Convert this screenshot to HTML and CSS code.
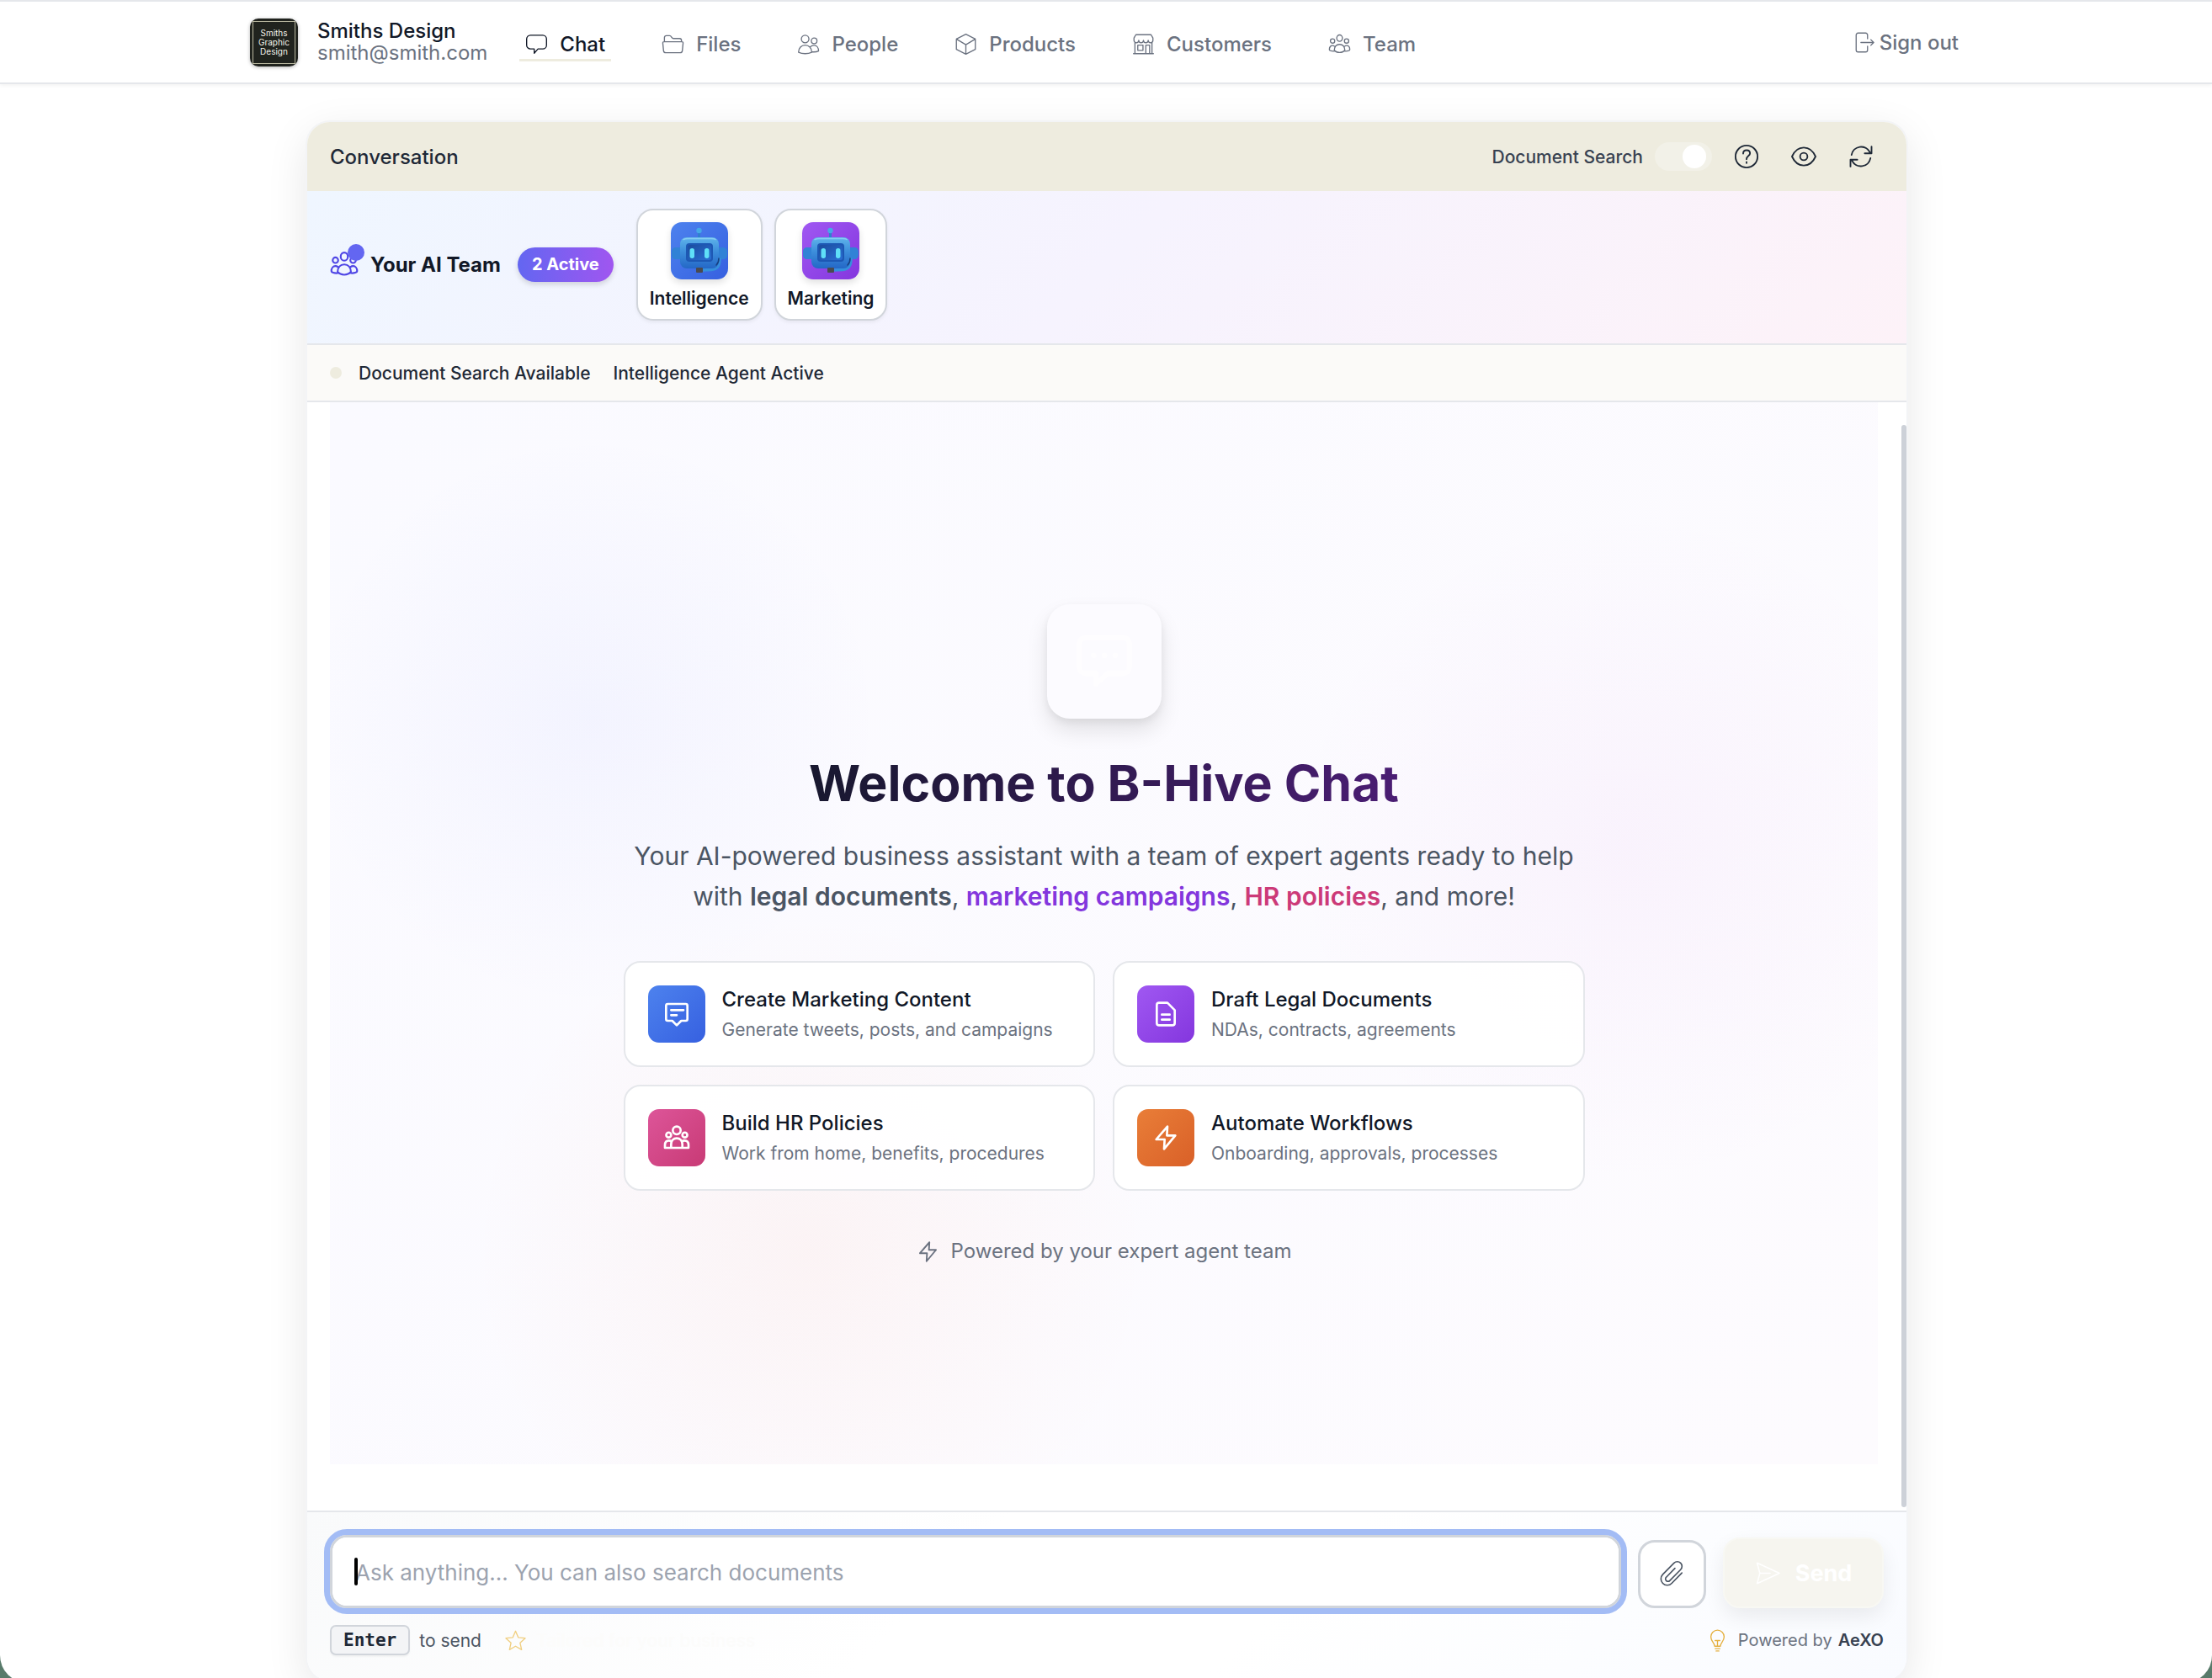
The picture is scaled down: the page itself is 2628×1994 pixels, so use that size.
FILE: index.html
```html
<!DOCTYPE html>
<html lang="en">
<head>
  <meta charset="UTF-8">
  <title>B-Hive Chat | Smiths Design</title>
  <meta name="viewport" content="width=device-width, initial-scale=1.0" />
  <link rel="stylesheet" href="styles.css">
</head>
<body>
  <!-- shared icons -->
  <svg class="sprite" width="0" height="0" aria-hidden="true">
    <symbol id="i-team" viewBox="0 0 24 24">
      <ellipse cx="12" cy="5.6" rx="3" ry="3.4"/>
      <circle cx="4.6" cy="8.6" r="2.3"/>
      <circle cx="19.4" cy="8.6" r="2.3"/>
      <path d="M12 12.2c-3.4 0-5.4 2.6-5.6 6.2 1.4 1.6 3.2 2.4 5.6 2.4s4.200-.8 5.600-2.400c-.2-3.600-2.200-6.200-5.600-6.200z"/>
      <path d="M6.600 14.200c-.6-.5-1.200-.7-2-.7-2 0-3.400 1.700-3.400 4.300 0 1 2.400 1.900 5.300 1.600M17.400 14.200c.6-.5 1.200-.7 2-.7 2 0 3.400 1.700 3.400 4.300 0 1-2.400 1.900-5.300 1.600"/>
    </symbol>
    <symbol id="i-bolt" viewBox="0 0 24 24">
      <path d="M13.500 2 3.500 13.500H11L10.500 22 20.500 10H13z"/>
    </symbol>
    <symbol id="i-robot" viewBox="0 0 68 68">
      <defs>
        <linearGradient id="head" x1="0" y1="0" x2="0" y2="1">
          <stop offset="0" stop-color="#5fb4ea"/>
          <stop offset=".45" stop-color="#3d8fdc"/>
          <stop offset="1" stop-color="#2467c6"/>
        </linearGradient>
        <linearGradient id="face" x1="0" y1="0" x2="1" y2="1">
          <stop offset="0" stop-color="#1b4c9e"/>
          <stop offset="1" stop-color="#2a70d4"/>
        </linearGradient>
      </defs>
      <rect x="32" y="12" width="3" height="8" fill="#2f7fd0"/>
      <circle cx="33.500" cy="10" r="3.200" fill="#45a8e8"/>
      <path d="M12 30H6c-3 0-5 2-5 5v4c0 3 2 5 5 5h6zM56 30h6c3 0 5 2 5 5v4c0 3-2 5-5 5h-6z" fill="#3182d6"/>
      <path d="M58 44c0 8-4 12-10 12.500L37 57" fill="none" stroke="#3590dc" stroke-width="3.500"/>
      <rect x="11" y="18" width="46" height="37" rx="8" fill="url(#head)"/>
      <path d="M15 20.500c2-1 4-1 6-1h27c2 0 4 0 5 1" fill="none" stroke="#86cdf3" stroke-width="1.500" stroke-linecap="round"/>
      <rect x="18" y="25" width="32" height="22" rx="4" fill="#1d58b4"/>
      <rect x="20" y="27" width="28" height="18" rx="3" fill="url(#face)"/>
      <rect x="22.500" y="31" width="5.500" height="12" rx="2.700" fill="#5fe0f8"/>
      <rect x="40" y="31" width="5.500" height="12" rx="2.700" fill="#5fe0f8"/>
      <path d="M57 43c0 3-1 6-3 8" fill="none" stroke="#173f80" stroke-width="1.500"/>
      <rect x="30" y="54" width="8" height="6" rx="1" fill="#4a4a50"/>
    </symbol>
  </svg>

  <div class="window">
    <header class="topbar">
      <div class="topbar-inner">
        <div class="logo"><span>Smiths<br>Graphic<br>Design</span></div>
        <div class="account">
          <div class="account-name">Smiths Design</div>
          <div class="account-mail">smith@smith.com</div>
        </div>
        <nav class="nav">
          <a href="#" class="nav-link active">
            <svg class="icon" viewBox="0 0 24 24"><path d="M5.500 2.500h13a4 4 0 0 1 4 4v6.500a4 4 0 0 1-4 4h-5L9.500 21.500V17h-4a4 4 0 0 1-4-4V6.500a4 4 0 0 1 4-4z"/></svg>Chat</a>
          <a href="#" class="nav-link">
            <svg class="icon" viewBox="0 0 24 24"><path d="M3 9.500V5a2 2 0 0 1 2-2h3.500c2 0 2 3 4 3H19a2 2 0 0 1 2 2v1.500M2.500 9.500h19c1 0 1.300.6 1.200 1.500l-.8 8a2.300 2.300 0 0 1-2.300 2H4.400a2.300 2.300 0 0 1-2.300-2l-.8-8c-.1-.9.2-1.500 1.200-1.500z"/></svg>Files</a>
          <a href="#" class="nav-link">
            <svg class="icon" viewBox="0 0 24 24"><circle cx="8.500" cy="6.500" r="4"/><circle cx="18" cy="8.500" r="3"/><path d="M8.500 13C4.500 13 1.500 16 1.500 20.500c4 2 10 2 14 0C15.500 16 12.500 13 8.500 13zM13.700 15c1.200-1.200 2.600-1.800 4.200-1.800 3 0 4.800 2.600 4.800 6-1.800.9-4.600 1.200-7.200.9"/></svg>People</a>
          <a href="#" class="nav-link">
            <svg class="icon" viewBox="0 0 24 24"><path d="M12 1.500 22 6.500v11L12 22.500l-10-5v-11zM2 6.500l10 6 10-6M12 12.500v10"/></svg>Products</a>
          <a href="#" class="nav-link">
            <svg class="icon" viewBox="0 0 24 24"><path d="M4 2h16l2 3.500V8a2.500 2.500 0 0 1-5 0 2.500 2.500 0 0 1-5 0 2.500 2.500 0 0 1-5 0 2.500 2.500 0 0 1-5 0V5.500zM3 10.500V22M21 10.500V22M1.500 22h21M6 13h5.500v5.500H6zM14.500 22v-9h4v9"/></svg>Customers</a>
          <a href="#" class="nav-link">
            <svg class="icon"><use href="#i-team"/></svg>Team</a>
        </nav>
        <a href="#" class="signout">
          <svg class="icon" viewBox="0 0 24 24"><path d="M14 8V4a2 2 0 0 0-2-2H4a2 2 0 0 0-2 2v16a2 2 0 0 0 2 2h8a2 2 0 0 0 2-2v-4M7 12h13.500M17.500 9l3 3-3 3"/></svg>Sign out</a>
      </div>
    </header>

    <main class="main">
      <section class="chat">
        <div class="chat-header">
          <h2>Conversation</h2>
          <div class="chat-tools">
            <label for="docSearch">Document Search</label>
            <input type="checkbox" id="docSearch" class="toggle" checked />
            <button type="button" class="tool" aria-label="Help">
              <svg viewBox="0 0 24 24"><circle cx="12" cy="12" r="10.500"/><path d="M8.800 9.200c0-2 1.500-3.200 3.300-3.200s3.200 1.200 3.200 3c0 2.500-3.300 2.500-3.300 5.500M12 17.200v1"/></svg>
            </button>
            <button type="button" class="tool" aria-label="Preview">
              <svg viewBox="0 0 24 24"><path d="M12 3.500c5 0 9 3.600 11.200 8.500C21 16.900 17 20.500 12 20.500S3 16.900.8 12C3 7.100 7 3.500 12 3.500z"/><circle cx="12" cy="12" r="3.500"/></svg>
            </button>
            <button type="button" class="tool" aria-label="Refresh">
              <svg viewBox="0 0 24 24"><path d="M3 10.500a9.300 9.300 0 0 1 17.500-2.500M22 2.500v6.500h-6.500M21 13.500A9.300 9.300 0 0 1 3.500 16M2 21.500V15h6.500"/></svg>
            </button>
          </div>
        </div>

        <div class="team">
          <div class="team-title">
            <span class="team-icon"><svg><use href="#i-team"/></svg></span>
            <h3>Your AI Team</h3>
          </div>
          <span class="badge">2 Active</span>
          <div class="agents">
            <button type="button" class="agent">
              <span class="agent-pic blue"><svg><use href="#i-robot"/></svg></span>Intelligence
            </button>
            <button type="button" class="agent">
              <span class="agent-pic purple"><svg><use href="#i-robot"/></svg></span>Marketing
            </button>
          </div>
        </div>

        <div class="status">
          <span class="status-dot"></span>
          <span>Document Search Available</span>
          <span class="status-agent">Intelligence Agent Active</span>
        </div>

        <div class="messages">
          <div class="welcome">
            <div class="welcome-icon">
              <svg viewBox="0 0 24 24"><path d="M4 2h16a2.500 2.500 0 0 1 2.500 2.500v10A2.500 2.500 0 0 1 20 17h-6.500l-5 4.500V17H4a2.500 2.500 0 0 1-2.500-2.500v-10A2.500 2.500 0 0 1 4 2zM7.500 9.500h.1M12 9.500h.1M16.500 9.500h.1"/></svg>
            </div>
            <h1>Welcome to B-Hive Chat</h1>
            <p class="intro">Your AI-powered business assistant with a team of expert agents ready to help<br>
              with <strong>legal documents</strong>, <strong class="c-purple">marketing campaigns</strong>, <strong class="c-pink">HR policies</strong>, and more!</p>
            <div class="cards">
              <button type="button" class="card">
                <span class="card-icon blue"><svg viewBox="0 0 24 24"><path d="M4 3h16a1.500 1.500 0 0 1 1.500 1.500v12A1.500 1.500 0 0 1 20 18h-4l-4 4-4-4H4a1.500 1.500 0 0 1-1.500-1.500v-12A1.500 1.500 0 0 1 4 3zM7 8.500h11M7 13h5"/></svg></span>
                <span class="card-text"><b>Create Marketing Content</b><small>Generate tweets, posts, and campaigns</small></span>
              </button>
              <button type="button" class="card">
                <span class="card-icon purple"><svg viewBox="0 0 24 24"><path d="M6 2h7.500L20 8.500V20a2 2 0 0 1-2 2H6a2 2 0 0 1-2-2V4a2 2 0 0 1 2-2zM8.500 12.500h7M8.500 17h7"/></svg></span>
                <span class="card-text"><b>Draft Legal Documents</b><small>NDAs, contracts, agreements</small></span>
              </button>
              <button type="button" class="card">
                <span class="card-icon pink"><svg viewBox="0 0 24 24"><circle cx="12" cy="5.500" r="3.500"/><circle cx="4.800" cy="9.500" r="2.200"/><circle cx="19.200" cy="9.500" r="2.200"/><path d="M7 21v-3c0-3.500 2-5.500 5-5.500s5 2 5 5.500v3zM7 21H1.500v-2.500c0-2.600 1.500-4 3.500-4 1 0 1.800.3 2.400.8M17 21h5.500v-2.500c0-2.600-1.500-4-3.500-4-1 0-1.800.3-2.400.8"/></svg></span>
                <span class="card-text"><b>Build HR Policies</b><small>Work from home, benefits, procedures</small></span>
              </button>
              <button type="button" class="card">
                <span class="card-icon orange"><svg><use href="#i-bolt"/></svg></span>
                <span class="card-text"><b>Automate Workflows</b><small>Onboarding, approvals, processes</small></span>
              </button>
            </div>
            <div class="powered"><svg><use href="#i-bolt"/></svg>Powered by your expert agent team</div>
          </div>
          <div class="scrollbar"></div>
        </div>

        <form class="composer">
          <div class="composer-row">
            <div class="field">
              <textarea rows="1" aria-label="Message" placeholder="Ask anything... You can also search documents"></textarea>
              <span class="caret"></span>
            </div>
            <button type="button" class="attach" aria-label="Attach file">
              <svg viewBox="0 0 24 24"><path d="m20.500 11-8.800 9a5.300 5.300 0 0 1-7.700 0 5.500 5.500 0 0 1 0-7.700l9.700-9.800a4 4 0 0 1 5.700 0 4 4 0 0 1 0 5.700L10 17.700a2 2 0 0 1-3 0 2 2 0 0 1 0-3L14.500 7"/></svg>
            </button>
            <button type="submit" class="send" disabled>
              <svg viewBox="0 0 24 24"><path d="M2 2.500 22.500 12 2 21.500 4.500 12zM4.500 12H14"/></svg>Send
            </button>
          </div>
          <div class="composer-foot">
            <kbd>Enter</kbd>
            <span>to send</span>
            <svg class="star" viewBox="0 0 24 24"><path d="m12 2 3 6.800 7.200.7-5.400 5 1.600 7.200L12 18l-6.400 3.700 1.600-7.200-5.400-5L9 8.800z"/></svg>
            <span class="tailored">Tailored for your business</span>
            <span class="brand">
              <svg viewBox="0 0 24 24"><path d="M9 18c0-3.500-4-5-4-10a7 7 0 0 1 14 0c0 5-4 6.500-4 10zM9.500 20.500h5M10.500 23h3M12 18v-5.500M9.500 12h5"/></svg>
              Powered by <b>AeXO</b>
            </span>
          </div>
        </form>
      </section>
    </main>
  </div>
</body>
</html>
```

FILE: styles.css
```css
* {
  box-sizing: border-box;
}

body {
  margin: 0;
  background: #587a6a;
  font-family: Inter, 'Liberation Sans', sans-serif;
  font-size: 24px;
  color: #111827;
  overflow: hidden;
}

button {
  font-family: inherit;
  color: inherit;
  cursor: pointer;
}

h1, h2, h3, p {
  margin: 0;
}

svg {
  fill: none;
  stroke: currentColor;
  stroke-width: 1.2;
  stroke-linecap: round;
  stroke-linejoin: round;
  flex-shrink: 0;
}

.sprite {
  position: absolute;
}

.window {
  display: flex;
  flex-direction: column;
  height: calc(100vh + 6px);
  background: #fff;
  border-radius: 0 0 33px 33px;
  overflow: hidden;
}

/* top bar */
.topbar {
  border-top: 2px solid #e5e7eb;
  border-bottom: 2px solid #e5e7eb;
  box-shadow: 0 2px 4px rgba(0, 0, 0, 0.05);
}

.topbar-inner {
  display: flex;
  align-items: center;
  max-width: 2034px;
  height: 96px;
  margin: 0 auto;
}

.logo {
  display: flex;
  align-items: center;
  justify-content: center;
  width: 57px;
  height: 57px;
  padding: 3px;
  border-radius: 10px;
  background: #20231e;
  box-shadow: 0 1px 4px rgba(0, 0, 0, 0.3);
}

.logo span {
  width: 100%;
  padding: 8px 0;
  border: 1px solid #b9b8a0;
  color: #f3f2ea;
  font-size: 10px;
  line-height: 11px;
  text-align: center;
}

.account {
  margin-left: 23px;
  line-height: 26px;
}

.account-name {
  font-weight: 500;
}

.account-mail {
  color: #6b7280;
}

.nav {
  display: flex;
  gap: 53px;
  margin-left: 38px;
}

.nav-link {
  display: flex;
  align-items: center;
  gap: 14px;
  padding: 8px 7px 0;
  border-bottom: 3px solid transparent;
  color: #6b7280;
  font-weight: 500;
  line-height: 34px;
  text-decoration: none;
}

.nav-link.active {
  color: #111827;
  border-color: #eeecdf;
}

.icon {
  width: 27px;
  height: 27px;
}

.signout {
  display: flex;
  align-items: center;
  gap: 3px;
  margin-left: auto;
  padding-right: 4px;
  color: #6b7280;
  font-weight: 500;
  text-decoration: none;
}

/* chat panel */
.main {
  flex: 1;
  display: flex;
  justify-content: center;
  min-height: 0;
  padding: 45px 27px 3px 29px;
}

.chat {
  display: flex;
  flex-direction: column;
  width: 100%;
  max-width: 1900px;
  border-radius: 27px;
  background: #fff;
  box-shadow: 0 0 0 2px #f3f4f6, 0 14px 50px rgba(0, 0, 0, 0.1);
  overflow: hidden;
}

.chat-header {
  display: flex;
  align-items: center;
  justify-content: space-between;
  height: 82px;
  padding: 0 27px;
  background: #eeecdf;
}

.chat-header h2 {
  font-size: 24px;
  font-weight: 500;
  color: #1f2937;
}

.chat-tools {
  display: flex;
  align-items: center;
}

.chat-tools label {
  margin-right: 14px;
  color: #374151;
  font-size: 21px;
  font-weight: 500;
}

.toggle {
  appearance: none;
  display: flex;
  justify-content: flex-end;
  width: 68px;
  height: 34px;
  margin: 0;
  padding: 3px 7px 3px;
  border-radius: 17px;
  background: #f2f1e8;
}

.toggle::before {
  content: "";
  width: 28px;
  height: 28px;
  border-radius: 50%;
  background: #fff;
}

.tool {
  display: flex;
  margin-left: 14px;
  padding: 12px;
  border: 0;
  background: none;
  color: #1f2937;
}

.tool svg {
  width: 30px;
  height: 30px;
  stroke-width: 1.5;
}

.team {
  display: flex;
  align-items: center;
  height: 183px;
  padding: 20px 27px 27px;
  border-bottom: 2px solid #e5e7eb;
  background: linear-gradient(135deg, #eff6ff, #f6f3fe 50%, #fdf2f8);
}

.team-title {
  display: flex;
  align-items: center;
  gap: 14px;
}

.team-title h3 {
  font-size: 24px;
  font-weight: 700;
}

.team-icon {
  position: relative;
  width: 34px;
  height: 34px;
  color: #4f46e5;
}

.team-icon svg {
  width: 34px;
  height: 34px;
  stroke-width: 1.5;
}

.team-icon::after {
  content: "";
  position: absolute;
  top: -7px;
  right: -7px;
  width: 20px;
  height: 20px;
  border-radius: 50%;
  background: #6366f1;
}

.badge {
  margin: 0 27px 0 20px;
  padding: 0 17px;
  border-radius: 21px;
  background: linear-gradient(90deg, #6366f1, #a056f0);
  box-shadow: 0 3px 6px rgba(0, 0, 0, 0.15);
  color: #fff;
  font-size: 20px;
  font-weight: 700;
  line-height: 41px;
}

.agents {
  display: flex;
  gap: 14px;
}

.agent {
  display: flex;
  flex-direction: column;
  align-items: center;
  gap: 12px;
  padding: 14px;
  border: 2px solid #d1d5db;
  border-radius: 20px;
  background: #fff;
  box-shadow: 0 2px 4px rgba(0, 0, 0, 0.06);
  font-size: 21px;
  font-weight: 600;
  line-height: 21px;
}

.agent-pic {
  width: 68px;
  height: 68px;
  border-radius: 13px;
  box-shadow: 0 4px 8px rgba(0, 0, 0, 0.12);
}

.agent-pic svg {
  width: 68px;
  height: 68px;
  stroke: none;
}

.blue {
  background: linear-gradient(135deg, #4d82ee, #3660e0);
}

.purple {
  background: linear-gradient(135deg, #a058f2, #8436de);
}

.pink {
  background: linear-gradient(135deg, #dd5599, #c83a75);
}

.orange {
  background: linear-gradient(135deg, #e97e38, #d96028);
}

.status {
  display: flex;
  align-items: center;
  height: 68px;
  padding: 0 27px;
  border-bottom: 2px solid #e5e7eb;
  background: #fbfaf8;
  color: #1f2937;
  font-size: 21px;
  font-weight: 500;
}

.status-dot {
  width: 14px;
  height: 14px;
  margin-right: 20px;
  border-radius: 50%;
  background: #eeecdf;
}

.status-agent {
  margin-left: 27px;
}

/* welcome screen */
.messages {
  position: relative;
  flex: 1;
  display: flex;
  min-height: 0;
  padding: 0 34px 55px 27px;
}

.scrollbar {
  position: absolute;
  top: 27px;
  right: 0;
  bottom: 4px;
  width: 6px;
  border-radius: 3px;
  background: #cdd1d8;
}

.welcome {
  flex: 1;
  display: flex;
  flex-direction: column;
  align-items: center;
  justify-content: center;
  padding-top: 4px;
  background:
    radial-gradient(circle at 17% 30%, rgba(99, 120, 255, 0.05), transparent 340px),
    radial-gradient(circle at 84% 42%, rgba(200, 90, 220, 0.05), transparent 400px),
    radial-gradient(circle at 31% 80%, rgba(250, 130, 90, 0.06), transparent 400px),
    linear-gradient(135deg, #fafaff, #fdfbfe);
}

.welcome-icon {
  display: flex;
  padding: 34px;
  border-radius: 27px;
  background: #fcfbff;
  box-shadow: 0 14px 26px rgba(0, 0, 0, 0.1), 0 4px 10px rgba(0, 0, 0, 0.06);
  color: #fefdff;
}

.welcome-icon svg {
  width: 68px;
  height: 68px;
  stroke-width: 2.2;
}

.welcome h1 {
  margin-top: 42px;
  background: linear-gradient(90deg, #18182f, #4a1d73);
  background-clip: text;
  color: transparent;
  font-size: 59px;
  font-weight: 700;
  line-height: 70px;
}

.intro {
  max-width: 1142px;
  margin: 27px 0 53px;
  color: #4b5563;
  font-size: 30px;
  line-height: 48px;
  text-align: center;
}

.intro strong {
  font-weight: 600;
}

.intro .c-purple {
  color: #8336dd;
}

.intro .c-pink {
  color: #cc3a78;
}

.cards {
  display: grid;
  grid-template-columns: 1fr 1fr;
  gap: 21px;
  width: 100%;
  max-width: 1142px;
}

.card {
  display: flex;
  align-items: center;
  gap: 20px;
  padding: 27px;
  border: 2px solid #e5e7eb;
  border-radius: 20px;
  background: rgba(255, 255, 255, 0.9);
  text-align: left;
}

.card-icon {
  display: flex;
  padding: 18px;
  border-radius: 13px;
  color: #fff;
}

.card-icon svg {
  width: 32px;
  height: 32px;
  stroke-width: 2;
}

.card-text b {
  display: block;
  font-size: 24px;
  font-weight: 500;
  line-height: 34px;
}

.card-text small {
  display: block;
  margin-top: 4px;
  color: #6b7280;
  font-size: 21px;
  line-height: 30px;
}

.powered {
  display: flex;
  align-items: center;
  gap: 14px;
  margin-top: 55px;
  color: #6b7280;
  font-size: 24px;
  line-height: 34px;
}

.powered svg {
  width: 27px;
  height: 27px;
  stroke-width: 1.7;
}

/* composer */
.composer {
  height: 202px;
  padding: 27px;
  border-top: 2px solid #e5e7eb;
  background: linear-gradient(135deg, #f9fafb, #fff 40%, #fff 60%, #f9fbff);
}

.composer-row {
  display: flex;
  align-items: flex-end;
  gap: 20px;
}

.field {
  position: relative;
  flex: 1;
  display: flex;
}

.field textarea {
  width: 100%;
  height: 87px;
  padding: 25px 27px;
  border: 3px solid #d1d5db;
  border-radius: 20px;
  outline: 7px solid #a3bcf5;
  background: #fff;
  font-family: inherit;
  font-size: 26px;
  line-height: 34px;
  resize: none;
}

.field textarea::placeholder {
  color: #9ca3af;
}

.caret {
  position: absolute;
  left: 29px;
  top: 27px;
  width: 4px;
  height: 33px;
  border-radius: 2px;
  background: #000;
}

.attach {
  display: flex;
  padding: 21px;
  border: 3px solid #d1d5db;
  border-radius: 20px;
  background: #fff;
  color: #4b5563;
}

.attach svg {
  width: 33px;
  height: 33px;
}

.send {
  display: flex;
  align-items: center;
  justify-content: center;
  gap: 17px;
  width: 191px;
  height: 84px;
  border: 2px solid #f8f8f3;
  border-radius: 20px;
  background: #f6f5ef;
  box-shadow: 0 10px 24px rgba(0, 0, 0, 0.07);
  color: #fff;
  font-size: 27px;
  font-weight: 700;
}

.send svg {
  width: 31px;
  height: 31px;
}

.composer-foot {
  display: flex;
  align-items: center;
  margin-top: 20px;
  color: #4b5563;
  font-size: 21px;
}

kbd {
  margin-right: 11px;
  padding: 0 14px;
  border: 2px solid #d1d5db;
  border-radius: 7px;
  background: #f3f4f6;
  box-shadow: 0 2px 2px rgba(0, 0, 0, 0.04);
  color: #1f2937;
  font-family: 'DejaVu Sans Mono', monospace;
  font-size: 21px;
  font-weight: 700;
  line-height: 32px;
}

.star {
  width: 27px;
  height: 27px;
  margin: 0 11px 0 27px;
  color: #f0cf80;
}

.tailored {
  color: #fcfcfb;
  font-weight: 500;
}

.brand {
  display: flex;
  align-items: center;
  gap: 7px;
  margin-left: auto;
  color: #6b7280;
  font-size: 20px;
}

.brand svg {
  width: 27px;
  height: 27px;
  margin-right: 4px;
  color: #e5b040;
}

.brand b {
  color: #374151;
  font-weight: 600;
}
```
